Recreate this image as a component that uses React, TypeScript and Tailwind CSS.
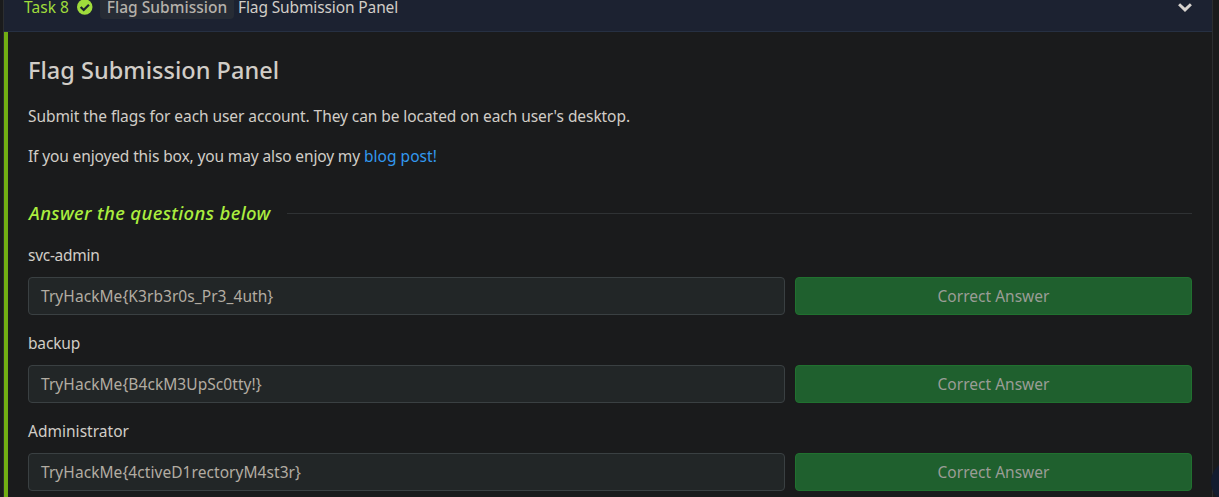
const answers = [
  { label: "svc-admin", labelClass: "tracking-[-0.28px]", flag: "TryHackMe{K3rb3r0s_Pr3_4uth}" },
  { label: "backup", labelClass: "tracking-[-0.17px]", flag: "TryHackMe{B4ckM3UpSc0tty!}" },
  { label: "Administrator", labelClass: "tracking-[0.02px]", flag: "TryHackMe{4ctiveD1rectoryM4st3r}" },
];

function CheckCircle() {
  return (
    <svg className="size-4 shrink-0" viewBox="0 0 512 512" aria-hidden="true">
      <circle cx="248" cy="256" r="248" fill="#9fdc3c" />
      <path d="M118 254l96 96 168-168" fill="none" stroke="#1c2231" strokeWidth="72" />
    </svg>
  );
}

function TaskHeader() {
  return (
    <header className="-mt-[17px] flex h-[49px] shrink-0 items-center border-b border-[#263042] bg-[#1c2231] pr-5 pl-5">
      <span className="w-[45px] whitespace-nowrap text-[#9fdc3c] tracking-[0.05px]">Task 8</span>
      <span className="ml-[7.5px] flex">
        <CheckCircle />
      </span>
      <span className="ml-[7.5px] flex h-6 w-[134px] items-center justify-center rounded bg-[#272c35] font-medium whitespace-nowrap text-[#b5b1aa] tracking-[0.03px]">
        Flag Submission
      </span>
      <span className="ml-1 flex-1 whitespace-nowrap text-[#d1cdc7] tracking-[-0.12px]">Flag Submission Panel</span>
      <svg className="h-[9px] w-[14px]" viewBox="0 0 14 9" aria-hidden="true">
        <path d="M1.1 1.2l5.9 5.7 5.9-5.7" fill="none" stroke="#d8d4cf" strokeWidth="2.9" />
      </svg>
    </header>
  );
}

function AnswerRow({ label, labelClass, flag }: { label: string; labelClass: string; flag: string }) {
  return (
    <div className="mb-4">
      <div className={labelClass}>{label}</div>
      <div className="mt-2.5 grid grid-cols-[757px_397px] gap-2.5">
        <div className="flex h-[38px] items-center rounded border border-[#3a4042] bg-[#222627] px-3 text-[#b2aca2] tracking-[0.06px]">
          {flag}
        </div>
        <div className="flex h-[38px] items-center justify-center rounded border border-[#20712f] bg-[#1f602e] text-[#9a9d96] tracking-[0.02px]">
          Correct Answer
        </div>
      </div>
    </div>
  );
}

export default function App() {
  return (
    <div className="relative h-[497px] w-full overflow-hidden bg-[#1a1b1c] font-['Noto_Sans',sans-serif] text-[15.5px] leading-6 text-[#d1cdc7]">
      <main className="ml-[3px] flex h-full w-[1210px] flex-col border-x border-[#2c2e30]">
        <TaskHeader />
        <section className="flex-1 border-l-4 border-[#72ae13] pt-6 pr-5 pl-5">
          <h1 className="text-[23.5px] leading-7 font-medium tracking-[0.03px]">Flag Submission Panel</h1>
          <p className="mt-5 tracking-[-0.07px]">
            Submit the flags for each user account. They can be located on each user's desktop.
          </p>
          <p className="mt-4 tracking-[-0.13px]">
            If you enjoyed this box, you may also enjoy my{" "}
            <a className="text-[#3298ee] tracking-[0.04px]">blog post!</a>
          </p>
          <div className="mt-8 flex h-[27px] items-center">
            <h2 className="w-[259px] shrink-0 pb-0.5 pl-px text-[18.5px] leading-6 font-medium whitespace-nowrap text-[#abee3f] italic tracking-[0.38px]">
              Answer the questions below
            </h2>
            <hr className="flex-1 border-t border-[#2f3234]" />
          </div>
          <div className="mt-4">
            {answers.map((a) => (
              <AnswerRow key={a.label} {...a} />
            ))}
          </div>
        </section>
      </main>
      <div className="absolute top-[460px] left-[1211px] size-11 rounded-full bg-[#131c2f]" />
    </div>
  );
}
